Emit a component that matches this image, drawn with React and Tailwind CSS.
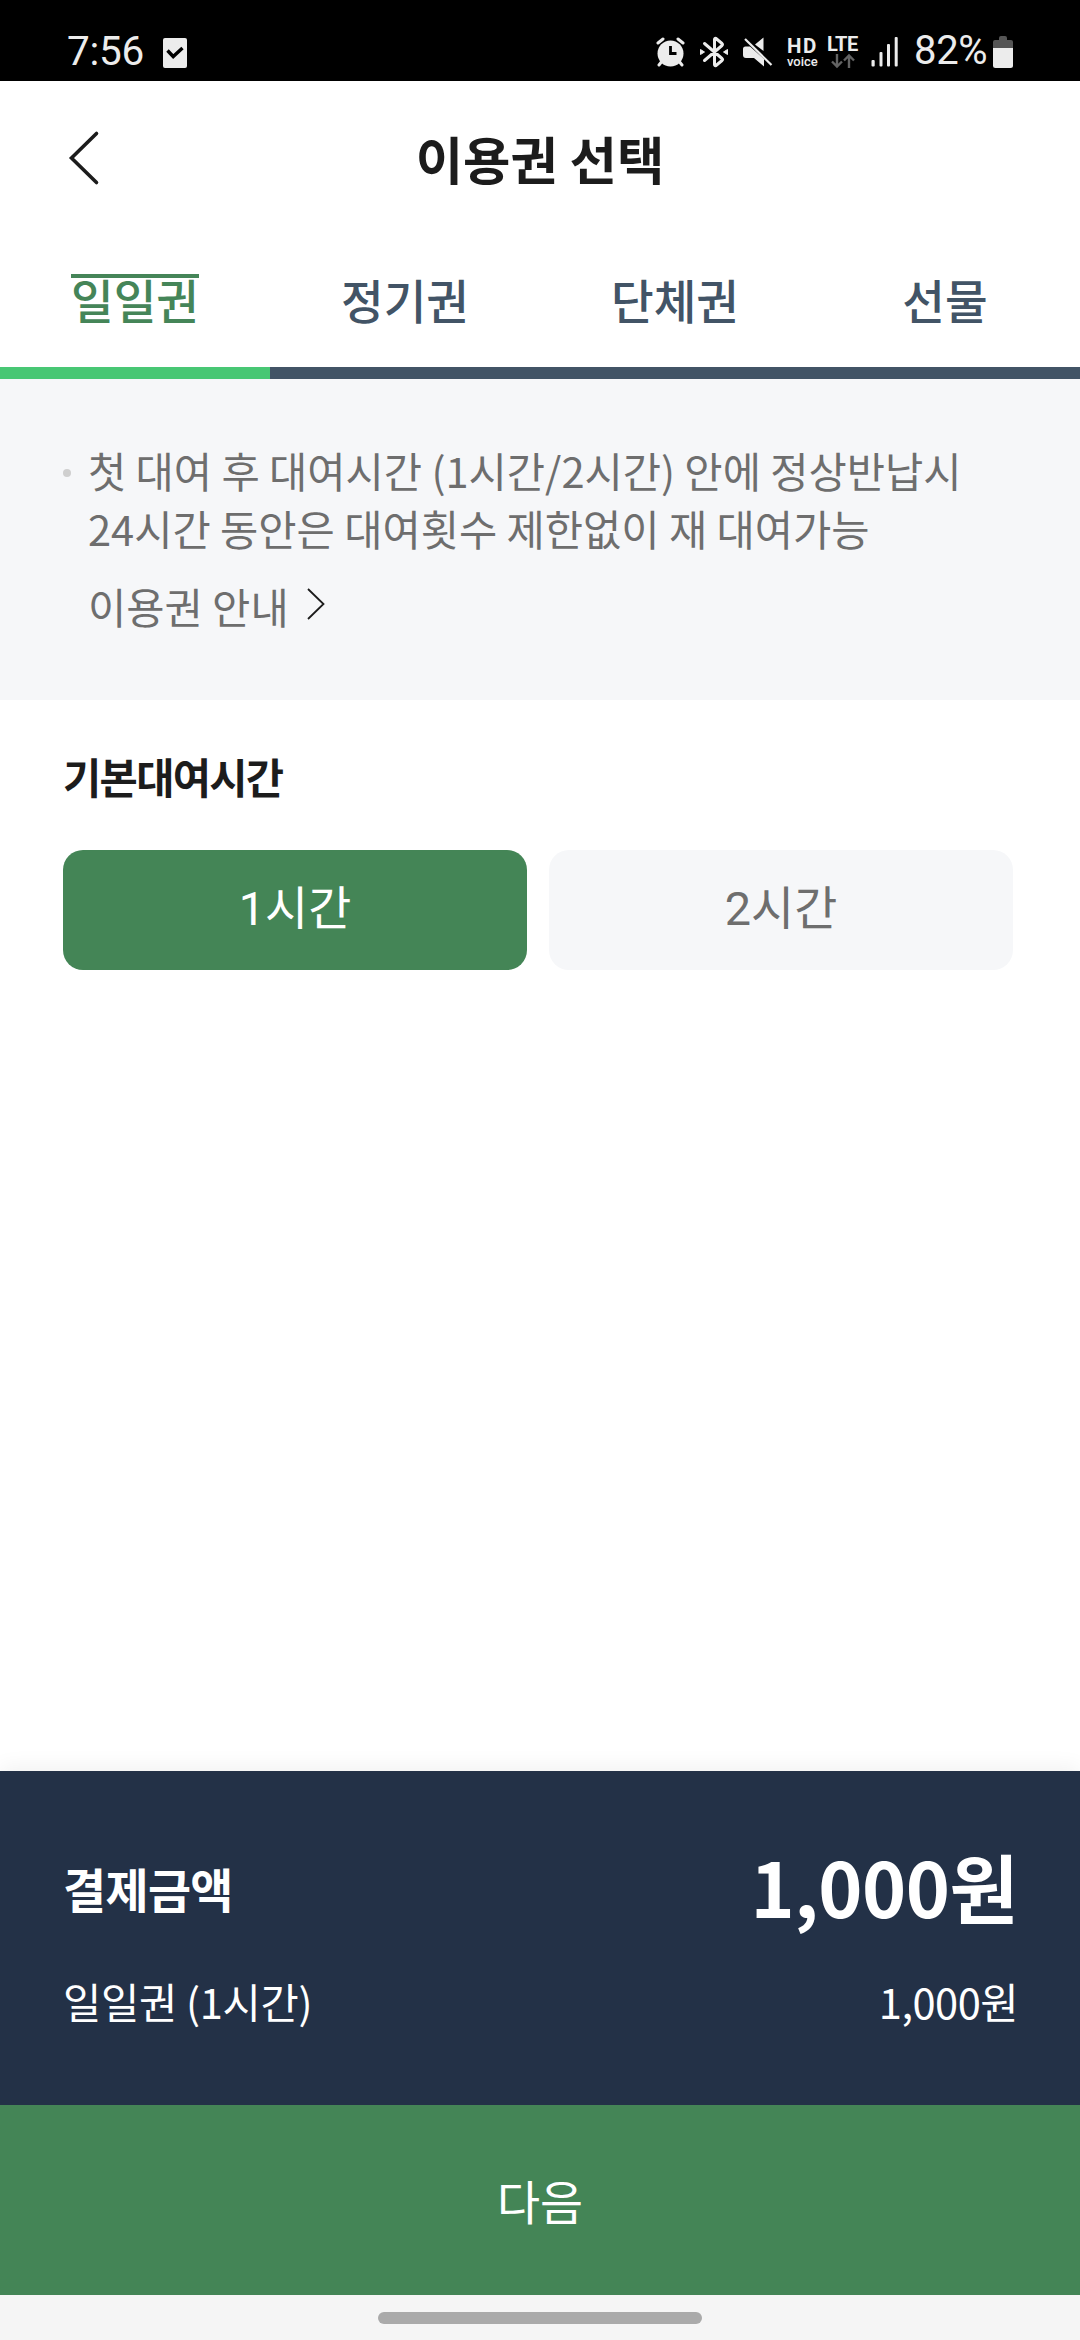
import { useState } from 'react';

const tabs = ['일일권', '정기권', '단체권', '선물'];
const hours = ['1시간', '2시간'];

function StatusBar() {
  return (
    <div className="h-[81px] shrink-0 bg-black text-[#ececec] fill-[#ececec] flex items-start pl-[67px] font-[Roboto,sans-serif]">
      <span className="mt-[31px] w-[96px] text-[40.5px] leading-[40px] tracking-[-0.3px]">7:56</span>
      <svg className="mt-[38px]" width="24" height="30" viewBox="0 0 24 30">
        <rect width="24" height="30" rx="2" />
        <path d="M4.500 12.500l5.700 6L19.500 10" fill="none" stroke="#000" strokeWidth="3.400" />
      </svg>

      <div className="ml-[469px] flex items-start">
        {/* alarm */}
        <svg className="mt-[37px]" width="29" height="30" viewBox="0 0 29 30">
          <circle cx="14.500" cy="16.500" r="13" />
          <path d="M2 6l5-4M27 6l-5-4M3 28l4-5M26 28l-4-5" stroke="#ececec" strokeWidth="3" strokeLinecap="round" />
          <path d="M14.500 9v7.500h6" fill="none" stroke="#000" strokeWidth="2.800" />
        </svg>
        {/* bluetooth */}
        <svg className="mt-[36px] ml-[15px]" width="28" height="32" viewBox="0 0 28 32">
          <path d="M4.500 7.500L22 22.500q1 1 0 2L16 29.500q-1.500 .5-1.500-1V3.500q0-1.500 1.500-1L22 7.500q1 1 0 2L4.500 24.500" fill="none" stroke="#ececec" strokeWidth="3" strokeLinecap="round" strokeLinejoin="round" />
          <path d="M.5 13.500l4 2.500-4 2.500zM27.500 13.500l-4 2.500 4 2.500z" stroke="#ececec" strokeLinejoin="round" />
        </svg>
        {/* muted speaker */}
        <svg className="mt-[37px] ml-[15px]" width="30" height="30" viewBox="0 0 30 30">
          <path d="M12 7.500L20.500 .5V14zM0 12q0-2.500 2.500-2.500H7L21 22v7.500L11 21H3q-3 0-3-3z" />
          <path d="M2 2l26.500 26" stroke="#ececec" strokeWidth="2.200" />
        </svg>
        <div className="mt-[38px] ml-[14px] w-[34px] flex flex-col">
          <span className="text-[20.5px] leading-[17px] font-bold tracking-[1.5px]">HD</span>
          <span className="mt-[1px] text-[13px] leading-[11px] font-medium">voice</span>
        </div>
        <div className="mt-[36px] ml-[6px] w-[35px] flex flex-col">
          <span className="text-[20px] leading-[17px] font-bold tracking-[-0.5px]">LTE</span>
          <svg className="ml-[4px]" width="24" height="16" viewBox="0 0 24 16">
            <path d="M6 1v12M1 8.500l5 5 5-5M18 15V3M13 7.500l5-5 5 5" fill="none" stroke="#636363" strokeWidth="2.400" />
          </svg>
        </div>
        <svg className="mt-[37px] ml-[9px]" width="28" height="30" viewBox="0 0 28 30">
          <rect x="0.500" y="23" width="3.200" height="6.500" rx="1" />
          <rect x="8.500" y="15" width="3" height="14.500" rx="1" />
          <rect x="16" y="7" width="3" height="22.500" rx="1" />
          <rect x="23.700" y="0" width="3" height="29.500" rx="1" />
        </svg>
        <span className="mt-[31px] ml-[15px] w-[78px] text-[40px] leading-[40px] tracking-[-0.3px]">82%</span>
        <svg className="mt-[36px] ml-[1px]" width="20" height="32" viewBox="0 0 20 32">
          <path d="M0 12V6q0-2 2-2h4V2q0-2 2-2h4q2 0 2 2v2h4q2 0 2 2v6z" fill="#555" />
          <path d="M0 12h20v17.500q0 2.500-2.500 2.500h-15Q0 32 0 29.500z" />
        </svg>
      </div>
    </div>
  );
}

function Header() {
  return (
    <header className="h-[153px] shrink-0 grid grid-cols-3 items-center">
      <button className="ml-[68px] justify-self-start">
        <svg width="32" height="56" viewBox="0 0 32 56">
          <path d="M28.500 3.500L3.500 28l25 24.500" fill="none" stroke="#1c1c1c" strokeWidth="3.600" strokeLinecap="round" />
        </svg>
      </button>
      <h1 className="text-center text-[51.5px] leading-[60px] font-bold whitespace-nowrap text-[#1c1c1c]">이용권 선택</h1>
    </header>
  );
}

export default function App() {
  const [activeTab, setActiveTab] = useState(0);
  const [hour, setHour] = useState(0);

  return (
    <div className="w-[1080px] h-[2340px] flex flex-col bg-white overflow-hidden font-['Noto_Sans_CJK_KR',sans-serif]">
      <StatusBar />
      <Header />

      {/* Tabs */}
      <nav className="grid grid-cols-4 shrink-0 text-[46.4px] leading-[41px] font-medium">
        {tabs.map((tab, i) => (
          <button
            key={tab}
            onClick={() => setActiveTab(i)}
            className={`h-[145px] flex justify-center pt-[40px] border-b-[12px] ${
              i === activeTab ? 'text-[#458558] border-[#48c774]' : 'text-[#425466] border-[#425466]'
            }`}
          >
            <span className={`border-t-4 ${i === activeTab ? 'border-[#458558]' : 'border-transparent'}`}>{tab}</span>
          </button>
        ))}
      </nav>

      {/* Ticket notice */}
      <section className="h-[321px] shrink-0 bg-[#f6f7f9] pt-[62px] pl-[63px] text-[41.6px] leading-[58.2px] text-[#6e6e6e]">
        <div className="flex">
          <span className="mt-[28px] mr-[17px] size-2 rounded-full bg-[#cfcfcf]" />
          <p>
            첫 대여 후 대여시간 (1시간/2시간) 안에 정상반납시
            <br />
            24시간 동안은 대여횟수 제한없이 재 대여가능
          </p>
        </div>
        <a className="mt-[20px] ml-[25px] flex">
          이용권 안내
          <svg className="mt-[10px] ml-[17px]" width="20" height="34" viewBox="0 0 20 34">
            <path d="M2 2l15.500 15L2 32" fill="none" stroke="#1c1c1c" strokeWidth="1.800" />
          </svg>
        </a>
      </section>

      {/* Rental time */}
      <section className="flex-1 px-[63px] pt-[49px]">
        <h2 className="text-[41.6px] leading-[54px] font-bold tracking-[-1.7px] text-[#1c1c1c]">기본대여시간</h2>
        <div className="mt-[47px] mr-[4px] grid grid-cols-2 gap-[22px] font-[Roboto,'Noto_Sans_CJK_KR',sans-serif]">
          {hours.map((label, i) => (
            <button
              key={label}
              onClick={() => setHour(i)}
              className={`h-[120px] rounded-[20px] pb-[2px] text-[46.8px] ${
                i === hour ? 'bg-[#448556] text-white' : 'bg-[#f6f7f9] text-[#6e6e6e]'
              }`}
            >
              {label}
            </button>
          ))}
        </div>
      </section>

      {/* Payment summary */}
      <section className="h-[334px] shrink-0 pl-[63px] pr-[62px] pt-[62px] bg-[#233147] text-white shadow-[0_-4px_20px_rgba(0,0,0,0.06)]">
        <div className="h-[110px] flex items-center justify-between font-bold">
          <span className="text-[46.8px] leading-[60px] tracking-[-0.6px]">결제금액</span>
          <span className="pb-[5px] text-[75px] leading-[105px] tracking-[-0.5px]">1,000원</span>
        </div>
        <div className="mt-[28px] h-[60px] flex items-center justify-between text-[41.6px] tracking-[-0.3px]">
          <span>일일권 (1시간)</span>
          <span className="tracking-[-0.5px]">1,000원</span>
        </div>
      </section>

      <button className="h-[190px] shrink-0 bg-[#448556] text-white text-[46.8px] pt-[9px] font-[Roboto,'Noto_Sans_CJK_KR',sans-serif]">
        다음
      </button>

      {/* Gesture bar */}
      <div className="h-[45px] shrink-0 bg-[#f5f5f5] flex justify-center pt-[17px]">
        <div className="w-[324px] h-3 rounded-full bg-[#aaa]" />
      </div>
    </div>
  );
}
